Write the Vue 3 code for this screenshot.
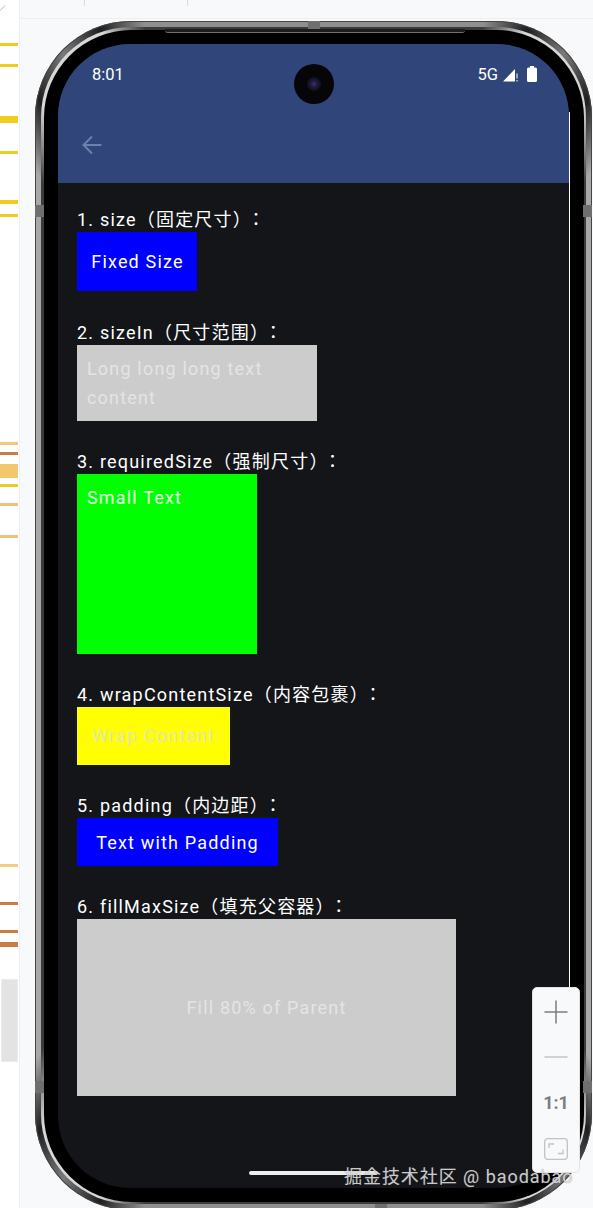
<script setup>
const marks = [
  { y: 43, h: 3, c: '#f0cc1c' }, { y: 64, h: 3, c: '#f0cc1c' }, { y: 116, h: 7, c: '#f0cc1c' },
  { y: 151, h: 3, c: '#f0cc1c' }, { y: 200, h: 4, c: '#f0cc1c' }, { y: 214, h: 3, c: '#f0cc1c' },
  { y: 442, h: 3, c: '#f2c777' }, { y: 452, h: 3, c: '#c97c43' }, { y: 464, h: 14, c: '#f3c76c' },
  { y: 484, h: 3, c: '#ebcb2c' }, { y: 503, h: 3, c: '#f3c077' }, { y: 535, h: 3, c: '#f3c077' },
  { y: 864, h: 3, c: '#f3cd80' }, { y: 902, h: 3, c: '#c97c43' }, { y: 930, h: 3, c: '#c97c43' },
  { y: 942, h: 5, c: '#c97c43' }
]
const notches = ['n-tl', 'n-bl', 'n-tr', 'n-br', 'n-top', 'n-bottom']
</script>

<template>
  <div class="page">
    <aside class="rail">
      <svg class="rail-tick" width="6" height="6" viewBox="0 0 6 6" fill="none" stroke="#b5b5b5" stroke-width="1"><path d="M0 5.500 5 0.500" /></svg>
      <div v-for="m in marks" :key="m.y" class="mark" :style="{ top: m.y + 'px', height: m.h + 'px', background: m.c }"></div>
      <div class="rail-block"></div>
    </aside>
    <main class="stage">
      <div class="tabbar"><i class="tick t1"></i><i class="tick t2"></i></div>
      <div class="phone">
        <i v-for="n in notches" :key="n" class="notch" :class="n"></i>
        <i class="ledge"></i>
        <i class="edge-line"></i>
        <div class="screen">
          <header class="head">
            <div class="status">
              <span>8:01</span>
              <div class="status-right">
                <span>5G</span>
                <svg width="15" height="14" viewBox="0 0 15 14">
                  <path d="M0 13.500 12 1v12.500z" fill="#fff" />
                  <path d="M14 5.500v5M14 12v1.500" stroke="#fff" stroke-width="1" />
                </svg>
                <svg width="10" height="16" viewBox="0 0 10 16">
                  <path d="M3 0h4v1.500h1.500q1.500 0 1.500 1.500v11.500q0 1.500-1.500 1.500h-7q-1.500 0-1.500-1.500V3q0-1.500 1.500-1.500H3z" fill="#fff" />
                </svg>
              </div>
            </div>
            <div class="appbar">
              <svg width="20" height="20" viewBox="0 0 20 20" fill="none" stroke="#6d81ad" stroke-width="1.900">
                <path d="M19.500 10H1.500M10 1.500 1.500 10l8.500 8.500" />
              </svg>
            </div>
            <div class="camera"><div class="lens"></div></div>
          </header>
          <div class="content">
            <section class="item">
              <p class="label">1. size（固定尺寸<span class="close">）：</span></p>
              <div class="box box1">Fixed Size</div>
            </section>
            <section class="item">
              <p class="label">2. sizeIn（尺寸范围<span class="close">）：</span></p>
              <div class="box box2">Long long long text content</div>
            </section>
            <section class="item">
              <p class="label">3. requiredSize（强制尺寸<span class="close">）：</span></p>
              <div class="box box3">Small Text</div>
            </section>
            <section class="item">
              <p class="label">4. wrapContentSize（内容包裹<span class="close">）：</span></p>
              <div class="box box4">Wrap Content</div>
            </section>
            <section class="item">
              <p class="label">5. padding（内边距<span class="close">）：</span></p>
              <div class="box box5">Text with Padding</div>
            </section>
            <section class="item">
              <p class="label">6. fillMaxSize（填充父容器<span class="close">）：</span></p>
              <div class="box box6">Fill 80% of Parent</div>
            </section>
          </div>
          <div class="homebar"></div>
        </div>
      </div>
      <div class="zoomctl">
        <svg class="z-icon" width="24" height="24" viewBox="0 0 24 24" stroke="#7b7d82" stroke-width="1.500"><path d="M0.500 12h23M12 0.500v23" /></svg>
        <svg class="z-icon" width="24" height="24" viewBox="0 0 24 24" stroke="#c3c4c7" stroke-width="1.500"><path d="M0.500 12h23" /></svg>
        <span class="z-text">1:1</span>
        <svg class="z-icon" width="24" height="24" viewBox="0 0 24 24" fill="none" stroke="#c2c3c6" stroke-width="1.300">
          <rect x="0.700" y="1.700" width="22.600" height="20.600" rx="3" />
          <path d="M5 11V7h5M14 16.500h5v-4" />
        </svg>
      </div>
      <div class="watermark">掘金技术社区 @ baodabao</div>
    </main>
  </div>
</template>

<style>
html, body { margin: 0; overflow: hidden; background: #f8f9fb; }
</style>

<style scoped>
.page {
  display: flex;
  width: 593px;
  height: 1208px;
  overflow: hidden;
  font-family: Roboto, "Noto Sans CJK JP", sans-serif;
  text-spacing-trim: space-all;
}
.rail {
  position: relative;
  width: 19px;
  flex: none;
  background: #fff;
  border-right: 1px solid #eeeff1;
}
.rail-tick { position: absolute; left: 0; top: 5px; }
.mark { position: absolute; left: 0; width: 18px; }
.rail-block {
  position: absolute;
  left: 1px;
  top: 979px;
  width: 17px;
  height: 83px;
  background: #e3e3e3;
  border: 1px solid #ececec;
  box-sizing: border-box;
}
.stage {
  position: relative;
  flex: 1;
  background: #f8f9fb;
}
.tabbar {
  position: relative;
  height: 18px;
  border-bottom: 1px solid #eeeff1;
}
.tick { position: absolute; top: 0; width: 1px; height: 6px; background: #d8d9db; }
.t1 { left: 64px; }
.t2 { left: 167px; }
.phone {
  position: relative;
  box-sizing: border-box;
  width: 557px;
  height: 1189px;
  margin: 2px 0 0 15px;
  padding: 23px 23px 22px;
  border-radius: 96px;
  background: conic-gradient(
    #8f8f8f 0 16deg, #1f1f1f 20deg, #7a7a7a 24deg, #1f1f1f 28deg, #a8a8a8 32deg 148deg,
    #1f1f1f 152deg, #7a7a7a 156deg, #1f1f1f 160deg, #8f8f8f 164deg 196deg,
    #1f1f1f 200deg, #7a7a7a 204deg, #1f1f1f 208deg, #a8a8a8 212deg 328deg,
    #1f1f1f 332deg, #7a7a7a 336deg, #1f1f1f 340deg, #8f8f8f 344deg
  );
  box-shadow: inset 0 0 0 1px #444;
}
.phone::before {
  content: "";
  position: absolute;
  inset: 6px;
  border-radius: 90px;
  background: conic-gradient(
    #3c3c3c 0 16deg, #d8d8d8 20deg 28deg, #3c3c3c 32deg 148deg, #d8d8d8 152deg 160deg, #3c3c3c 164deg 196deg,
    #d8d8d8 200deg 208deg, #3c3c3c 212deg 328deg, #d8d8d8 332deg 340deg, #3c3c3c 344deg
  );
}
.phone::after {
  content: "";
  position: absolute;
  inset: 8.500px;
  border-radius: 87.500px;
  background: #000;
}
.notch { position: absolute; z-index: 1; background: #6f6f6f; }
.n-tl, .n-tr, .n-bl, .n-br { width: 9px; height: 12px; }
.n-tl { left: 0; top: 184px; }
.n-tr { right: 0; top: 184px; }
.n-bl { left: 0; top: 1060px; }
.n-br { right: 0; top: 1060px; }
.n-top { left: 273px; top: 0; width: 12px; height: 8px; }
.n-bottom { left: 340px; bottom: 0; width: 12px; height: 6px; }
.ledge {
  position: absolute;
  z-index: 1;
  left: 130px;
  top: 8px;
  width: 300px;
  height: 4px;
  box-sizing: border-box;
  background: #1c1c1c;
  border-bottom: 1px solid #6f6f6f;
  border-radius: 0 0 3px 3px;
}
.edge-line {
  position: absolute;
  z-index: 1;
  left: 534px;
  top: 91px;
  width: 1px;
  height: 875px;
  background: #fff;
}
.screen {
  position: relative;
  z-index: 1;
  display: flex;
  flex-direction: column;
  width: 511px;
  height: 1144px;
  border-radius: 72px;
  overflow: hidden;
  background: #131519;
  color: #fff;
}
.head {
  position: relative;
  height: 139px;
  flex: none;
  background: #30467a;
}
.status {
  display: flex;
  align-items: center;
  justify-content: space-between;
  height: 20px;
  padding: 21px 32px 0 34px;
  font-size: 16.500px;
  line-height: 20px;
}
.status-right { display: flex; align-items: center; gap: 5px; }
.status-right svg:last-child { margin-left: 4px; margin-top: -2px; }
.appbar { display: flex; align-items: center; height: 20px; padding: 50px 0 0 24px; }
.camera {
  position: absolute;
  left: 236px;
  top: 20px;
  width: 40px;
  height: 40px;
  border-radius: 50%;
  background: #060608;
  display: flex;
  align-items: center;
  justify-content: center;
}
.lens {
  width: 14px;
  height: 14px;
  border-radius: 50%;
  background: radial-gradient(circle, #3a2f7e 0, #1d1a3a 35%, #101016 70%);
}
.content {
  display: flex;
  flex-direction: column;
  gap: 29px;
  padding: 25px 0 0 19px;
}
.item:first-child { margin-bottom: 1px; }
.label {
  margin: 0;
  height: 24px;
  font-size: 18px;
  line-height: 24px;
  letter-spacing: 1.200px;
  white-space: nowrap;
}
.close { letter-spacing: -3.800px; }
.box {
  box-sizing: border-box;
  font-size: 18px;
  letter-spacing: 1.180px;
  line-height: 29px;
}
.box1, .box4, .box5, .box6 {
  display: flex;
  align-items: center;
  justify-content: center;
}
.box1 { width: 120px; height: 59px; padding-left: 1px; background: #00f; }
.box2 { width: 240px; height: 76px; padding: 9px 10px; background: #ccc; color: #e4e4e4; }
.box3 { width: 180px; height: 180px; padding: 9px 10px; background: #0f0; color: #e6ffe6; }
.box4 { width: 153px; height: 58px; padding-bottom: 2px; background: #ff0; color: #e6e6b0; }
.box5 { width: 201px; height: 48px; background: #00f; }
.box6 { width: 379px; height: 177px; background: #ccc; color: #e4e4e4; }
.homebar {
  position: absolute;
  left: 191px;
  top: 1127px;
  width: 129px;
  height: 4px;
  border-radius: 2px;
  background: #eceded;
}
.zoomctl {
  position: absolute;
  z-index: 2;
  left: 512px;
  top: 987px;
  box-sizing: border-box;
  width: 48px;
  height: 186px;
  display: flex;
  flex-direction: column;
  align-items: center;
  padding: 12px 0 0;
  background: #f8f9fb;
  border: 1px solid #e2e3e6;
  border-radius: 5px;
}
.z-icon { flex: none; }
.z-icon:nth-child(2) { margin-top: 21px; }
.z-text {
  margin-top: 22px;
  height: 24px;
  font-size: 18px;
  line-height: 24px;
  font-weight: 700;
  color: #7b7d82;
}
.z-icon:last-child { margin-top: 22px; }
.watermark {
  position: absolute;
  z-index: 3;
  left: 324px;
  top: 1165px;
  white-space: nowrap;
  font-size: 18px;
  line-height: 24px;
  letter-spacing: 0.950px;
  color: rgba(255, 255, 255, 0.72);
  text-shadow: 0 0 1px rgba(90, 90, 90, 0.8);
}
</style>
